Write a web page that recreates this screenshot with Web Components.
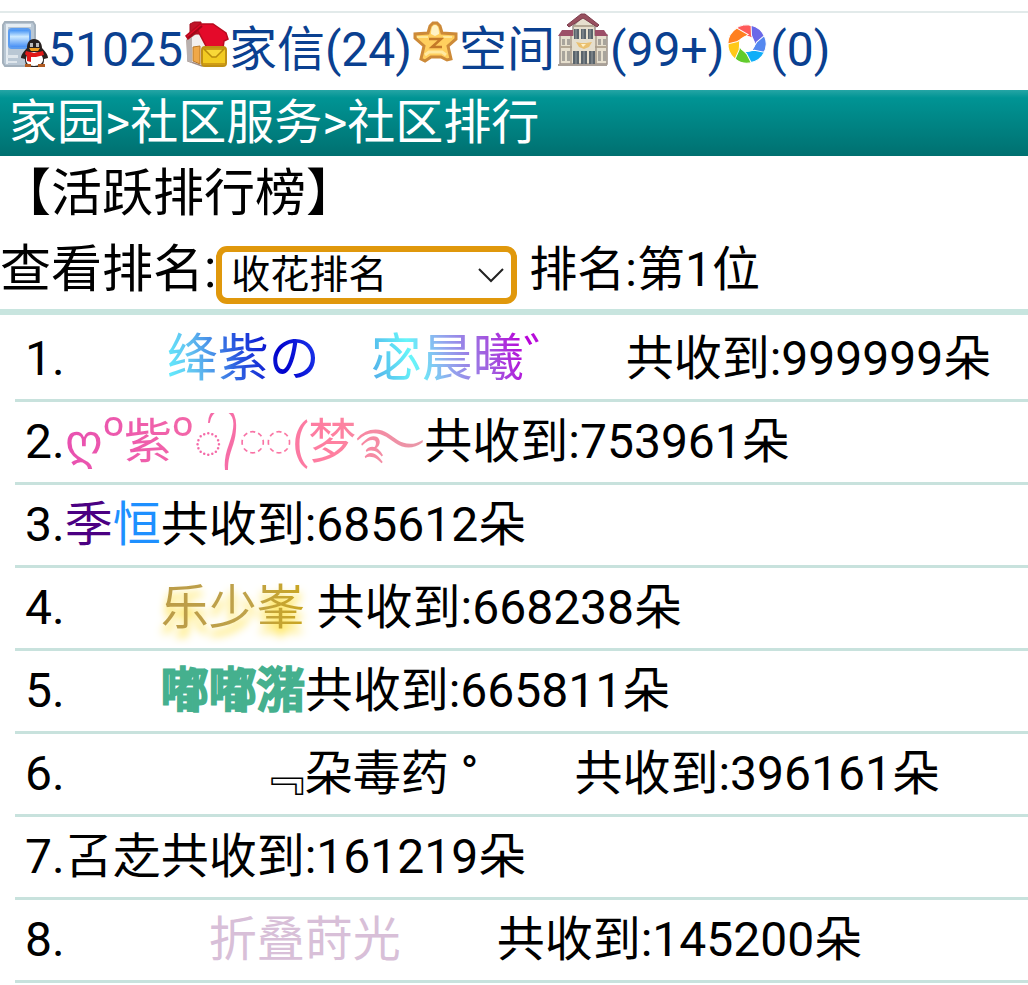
<!DOCTYPE html>
<html lang="zh-CN">
<head>
<meta charset="utf-8">
<meta name="viewport" content="width=device-width, initial-scale=1">
<title>社区排行</title>
<style>
  body { margin: 0; background: #fff; color: #000; font: 48px/80px Roboto, "Noto Sans CJK SC", sans-serif; overflow-x: hidden; }
  /* marks inside a member's decorated name */
  fancy-name small { font: 30px/30px "DejaVu Sans", sans-serif; vertical-align: 8px; }
  fancy-name em { font: 57px/57px "Noto Sans", sans-serif; }
  fancy-name i { font-style: normal; font-size: 42px; }
</style>
</head>
<body>
<community-page>
  <user-bar slot="top"></user-bar>
  <crumb-bar slot="top"></crumb-bar>
  <rank-filter></rank-filter>
  <rank-list>
    <rank-row rank="1" count="999999"><fancy-name tone="sky">　　<b class="a">绛紫の</b>　<b class="b">宓晨曦゛</b>　</fancy-name></rank-row>
    <rank-row rank="2" count="753961"><fancy-name tone="pink"><b>ღ<em>º</em>紫<em>º</em>᭄<small>◌◌</small>(梦<i>࿐</i></b></fancy-name></rank-row>
    <rank-row rank="3" count="685612"><fancy-name tone="duo"><b class="a">季</b><b class="b">恒</b></fancy-name></rank-row>
    <rank-row rank="4" count="668238"><fancy-name tone="glow">　　<b>乐少峯</b>&nbsp;</fancy-name></rank-row>
    <rank-row rank="5" count="665811"><fancy-name tone="bold">　　<b>嘟嘟潴</b></fancy-name></rank-row>
    <rank-row rank="6" count="396161"><fancy-name>　　　　﹃朶毒药&nbsp;°　　</fancy-name></rank-row>
    <rank-row rank="7" count="161219"><fancy-name>叾赱</fancy-name></rank-row>
    <rank-row rank="8" count="145200"><fancy-name tone="thistle">　　　<b>折叠莳光</b>　　</fancy-name></rank-row>
  </rank-list>
</community-page>

<template id="t-page">
  <style>
    :host { display: block; padding-top: 11px; }
    main { display: block; }
  </style>
  <header><slot name="top"></slot></header>
  <main><slot></slot></main>
</template>

<template id="t-user">
  <style>
    :host { display: block; border-top: 2px solid #e2eaea; }
    nav { display: flex; padding-bottom: 3px; line-height: 74px; white-space: nowrap; }
    a { display: flex; color: #0a4090; text-decoration: none; }
    svg { display: block; height: 54px; flex: none; }
  </style>
  <nav>
    <a href="#id">
      <svg width="48" viewBox="0 0 48 54" aria-hidden="true">
        <defs><linearGradient id="scr" x1="0" y1="0" x2="0" y2="1"><stop offset="0" stop-color="#2f86f4"/><stop offset=".4" stop-color="#cdeaff"/><stop offset="1" stop-color="#3a86f4"/></linearGradient></defs>
        <path d="M5 9h28l2 3v38l-2 3H5l-2-3V12z" fill="#b9c7d4" stroke="#a3b0bc" stroke-width="2"/>
        <path d="M6 11h25v3H8v37H6z" fill="#e6edf3"/>
        <rect x="9" y="16" width="21" height="19" rx="3" fill="url(#scr)" stroke="#5b9cf0" stroke-width="2"/>
        <path d="M7 42h11v3H7zM8 48h9v2H8z" fill="#dfe6ec"/>
        <path d="M34 26c-5 0-7 4-7 9-3 3-6 7-6 10l4 1c0 4 1 6 3 8h13c2-2 3-4 3-8l4-1c0-3-3-7-6-10 0-5-3-9-8-9z" fill="#28211f"/>
        <path d="M34 39c-6 0-8 4-8 8 0 3 3 6 8 6s9-3 9-6c0-4-3-8-9-8z" fill="#fff"/>
        <path d="M30 30h3v4h-3zM36 30h3v4h-3z" fill="#bbb"/>
        <path d="M29 35h11l-2 3h-7z" fill="#f0a020"/>
        <path d="M26 38l8 2 9-2 1 4-8 2-5 0 0 5-4-1 0-5-2-2z" fill="#e01818"/>
        <path d="M25 51l6 0v3h-6zM38 51h7v3h-7z" fill="#b05a20"/>
      </svg>51025</a>
    <a href="#mail">
      <svg width="46" viewBox="0 0 46 54" aria-hidden="true">
        <path d="M4 27L15 19l16 10v22l-12 2L5 48z" fill="#f3efee" stroke="#a08c84" stroke-width="1.500"/>
        <path d="M4 27v21l5 2V23z" fill="#b8b0ae"/>
        <path d="M10 34l7-1v18l-7-3z" fill="#f0a848" stroke="#b87828"/>
        <path d="M7 11l4-2h7v12H7z" fill="#c01428" stroke="#a00c1c"/>
        <path d="M17 11h13l13 9 2 6-4 2-1 7H24L15 18 5 26l-2-3z" fill="#e40a2a" stroke="#b80a1e" stroke-width="1.500"/>
        <path d="M19 13L5 25" stroke="#a00818" stroke-width="2"/>
        <rect x="19" y="34" width="24" height="19" rx="3" fill="#f2cb22" stroke="#bf9014" stroke-width="2"/>
        <path d="M21 36h20l-8 8h-4z" fill="#f8d838" stroke="#b88c0c" stroke-width="1.500"/>
        <path d="M20 50h22v2H20z" fill="#cf9c14"/>
      </svg>家信(24)</a>
    <a href="#space">
      <svg width="47" viewBox="0 0 47 54" aria-hidden="true">
        <path d="M21 10h4l3 3 2 7 14 1v5l-8 7 3 13-4 1-6-3h-10l-6 4-4-2 3-13-9-8v-4l13-1 2-7z" fill="#ffcf5e" stroke="#cd8a38" stroke-width="3" stroke-linejoin="miter"/>
        <path d="M19 21c0-5 1-9 4-9s4 4 4 9l-4 2z" fill="#fff3c4"/>
        <path d="M5 24h11M31 24h9" stroke="#ffe898" stroke-width="2"/>
        <path d="M17 26h12l-9 8h10" fill="none" stroke="#c47a28" stroke-width="2.500"/>
        <path d="M13 42l4-3h13l4 3" fill="none" stroke="#ffe9a0" stroke-width="3"/>
      </svg>空间</a>
    <a href="#city">
      <svg width="55" viewBox="-1 0 55 54" aria-hidden="true">
        <path d="M4 22h13v-9L27 3l12 10v9h12v29H4z" fill="#e6dfce" stroke="#9c928a" stroke-width="1.500"/>
        <path d="M11 12L25 1h4l14 11-2 2-14-9-14 9z" fill="#98505f" stroke="#7c3c4c"/>
        <path d="M6 17h11v6H2zM39 17h9l4 6H39z" fill="#9c4f68"/>
        <path d="M18 12h20v2H18zM4 33h12v2H4zM39 33h12v2H39z" fill="#b4a894"/>
        <path d="M18 16h5v10h-5zM25 16h5v10h-5zM32 16h5v10h-5zM17 38h6v14h-6zM25 38h6v14h-6zM33 38h6v14h-6z" fill="#5a646c"/>
        <path d="M20 16v10M27 16v10M34 16v10M20 38v14M28 38v14M36 38v14" stroke="#939a9e"/>
        <path d="M6 26h3v6H6zM11 26h3v6h-3zM42 26h3v6h-3zM47 26h3v6h-3zM6 38h3v10H6zM11 38h3v10h-3zM42 38h3v10h-3zM47 38h3v10h-3z" fill="#a8a49c"/>
        <path d="M15 23v29M40 23v29" stroke="#a89c8c" stroke-width="1.500"/>
        <path d="M20 29l5 1h5l6-1-3 5-5 2-5-2z" fill="#eac070"/>
        <path d="M25 31h5l-3 3z" fill="#fff0c8"/>
        <path d="M2 51h49v2H2z" fill="#a8a098"/>
      </svg>(99+)</a>
    <a href="#photos">
      <svg width="46" viewBox="-23 -31 46 54" aria-hidden="true">
        <g stroke="#fff" stroke-width="1">
          <path d="M-12-15A19 19 0 0 1 6-18L8-5-4-9z" fill="#ff5a5a"/>
          <path d="M-12-15A19 19 0 0 1 6-18L8-5-4-9z" transform="rotate(51)" fill="#6a68e8"/>
          <path d="M-12-15A19 19 0 0 1 6-18L8-5-4-9z" transform="rotate(103)" fill="#5488f0"/>
          <path d="M-12-15A19 19 0 0 1 6-18L8-5-4-9z" transform="rotate(154)" fill="#10aef8"/>
          <path d="M-12-15A19 19 0 0 1 6-18L8-5-4-9z" transform="rotate(206)" fill="#62cc2c"/>
          <path d="M-12-15A19 19 0 0 1 6-18L8-5-4-9z" transform="rotate(257)" fill="#ffc818"/>
          <path d="M-12-15A19 19 0 0 1 6-18L8-5-4-9z" transform="rotate(309)" fill="#ff8020"/>
        </g>
        <circle r="8" fill="#fff"/>
      </svg>(0)</a>
  </nav>
</template>

<template id="t-crumb">
  <style>
    :host { display: block; background: linear-gradient(#25a5a5 0, #009494 12%, #007070 100%); }
    nav { padding: 0 9px; line-height: 66px; color: #fff; white-space: nowrap; }
    a { color: inherit; text-decoration: none; }
  </style>
  <nav><a href="#home">家园</a>&gt;<a href="#service">社区服务</a>&gt;<span>社区排行</span></nav>
</template>

<template id="t-filter">
  <style>
    :host { display: block; border-bottom: 6px solid #c8e5df; }
    h1 { margin: 0; font-size: 51px; font-weight: 400; line-height: 75px; }
    form { display: flex; align-items: flex-end; line-height: 78px; white-space: nowrap; }
    label { font-size: 51px; }
    .pick { position: relative; display: block; padding-bottom: 5px; line-height: 0; }
    select { appearance: none; box-sizing: border-box; width: 301px; height: 58px; margin: 0; padding: 0 40px 0 9px; border: 6px solid #e0980c; border-radius: 11px; background: #fff; color: #000; font: 39px/46px Roboto, "Noto Sans CJK SC", sans-serif; outline: 0; }
    svg { position: absolute; right: 12px; top: 20px; pointer-events: none; }
    output { padding-left: 12px; }
  </style>
  <h1>【活跃排行榜】</h1>
  <form>
    <label for="kind">查看排名:</label>
    <span class="pick">
      <select id="kind"><option>收花排名</option><option>送花排名</option></select>
      <svg width="28" height="18" viewBox="0 0 28 18" aria-hidden="true"><path d="M2 3l12 12L26 3" fill="none" stroke="#222" stroke-width="2"/></svg>
    </span>
    <output for="kind">排名:第1位</output>
  </form>
</template>

<template id="t-list">
  <style>
    :host { display: block; padding: 4px 0 0 15px; }
  </style>
  <slot></slot>
</template>

<template id="t-row">
  <style>
    :host { display: flex; align-items: flex-start; padding-left: 10px; height: 80px; border-bottom: 3px solid #c8e2dd; white-space: nowrap; }
  </style>
  <span class="no"></span><slot></slot><span class="sum"></span>
</template>

<template id="t-name">
  <style>
    :host { display: block; height: 80px; }
    :host([tone="sky"]) { font-size: 51px; }
    ::slotted(b) { font-weight: 400; }
    :host([tone="sky"]) ::slotted(b), :host([tone="pink"]) ::slotted(b), :host([tone="glow"]) ::slotted(b) { color: transparent; -webkit-background-clip: text; background-clip: text; }
    :host([tone="sky"]) ::slotted(.a) { background-image: linear-gradient(75deg, #62f4ff 0, #62c0f0 20%, #2c5ce0 46%, #0000cc 72%, #2040f0 100%); }
    :host([tone="sky"]) ::slotted(.b) { background-image: linear-gradient(75deg, #50a8e8 0, #66f6fa 22%, #92a8ee 38%, #a060e0 56%, #b800d8 76%, #b040e0 100%); }
    :host([tone="pink"]) ::slotted(b) { background-image: linear-gradient(90deg, #e850b0, #ff80a0 75%, #e898a8); }
    :host([tone="duo"]) ::slotted(.a) { color: #4b0082; }
    :host([tone="duo"]) ::slotted(.b) { color: #1e90ff; }
    :host([tone="glow"]) ::slotted(b) { background-image: linear-gradient(90deg, #bb9c48, #bfa24a 60%, #caa620); filter: drop-shadow(0 8px 5px #ffdc20); }
    :host([tone="bold"]) ::slotted(b) { color: #45b08e; -webkit-text-stroke: 3px #45b08e; }
    :host([tone="thistle"]) ::slotted(b) { color: #d8bfd8; }
  </style>
  <slot></slot>
</template>

<script>
  class TemplateElement extends HTMLElement {
    constructor() {
      super();
      this.attachShadow({ mode: "open" }).append(
        document.getElementById(this.constructor.template).content.cloneNode(true));
    }
  }
  const define = (tag, template) =>
    customElements.define(tag, class extends TemplateElement { static template = template; });

  define("community-page", "t-page");
  define("user-bar", "t-user");
  define("crumb-bar", "t-crumb");
  define("rank-filter", "t-filter");
  define("rank-list", "t-list");
  define("fancy-name", "t-name");

  customElements.define("rank-row", class extends TemplateElement {
    static template = "t-row";
    connectedCallback() {
      this.shadowRoot.querySelector(".no").textContent = this.getAttribute("rank") + ".";
      this.shadowRoot.querySelector(".sum").textContent = "共收到:" + this.getAttribute("count") + "朵";
    }
  });
</script>
</body>
</html>
